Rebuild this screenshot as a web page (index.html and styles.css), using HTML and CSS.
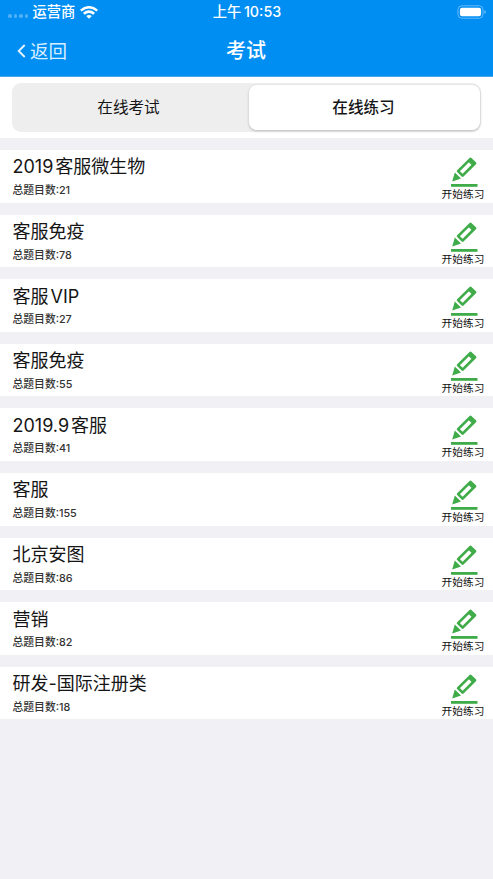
FILE: index.html
```
<!DOCTYPE html>
<html lang="zh-CN">
<head>
<meta charset="utf-8">
<title>考试</title>
<link rel="stylesheet" href="styles.css">
</head>
<body>
<svg class="defs" width="0" height="0"><defs>
<symbol id="pen" viewBox="0 0 28 32">
<path d="M20.5 2.9 25 7.2 12.6 19.6 8.1 15.1Z" fill="none" stroke="#3fac49" stroke-width="2.7" stroke-linejoin="round"/>
<path d="M18.9 4.5 23.4 8.9" stroke="#3fac49" stroke-width="2.6"/>
<path d="M4.8 16.6 11 22.6 2.2 25.4Z" fill="#3fac49"/>
<path d="M1 28H27.5V30.8H1Z" fill="#3fac49"/>
</symbol>
</defs></svg>
<header class="top">
<div class="status">
<div class="carrier"><span class="dots"><i></i><i></i><i></i><i></i></span><span>运营商</span>
<svg class="wifi" width="18" height="13" viewBox="0 0 18 13"><g fill="none" stroke="#fff" stroke-width="2.5"><path d="M.8 4.6Q9-2.1 17.2 4.6"/><path d="M3.8 7.8Q9 3.5 14.2 7.8"/></g><path d="M6.2 10Q9 7.8 11.8 10L9 12.8Z" fill="#fff"/></svg></div>
<div class="time">上午<span class="gap">10:53</span></div>
<svg class="battery" width="30" height="14" viewBox="0 0 30 14"><rect x="1" y=".8" width="25" height="12.4" rx="3.8" fill="none" stroke="#66b9f8"/><rect x="2.9" y="2.7" width="21.2" height="8.6" rx="2.2" fill="#fff"/><path d="M27.5 5Q30 7 27.5 9Z" fill="#8cc9fb"/></svg>
</div>
<nav class="nav">
<div class="back"><svg width="9" height="14" viewBox="0 0 9 14"><path d="M7.7 1 1.7 7 7.7 13" fill="none" stroke="#e4f3ff" stroke-width="1.9"/></svg><span>返回</span></div>
<h1>考试</h1>
<div></div>
</nav>
</header>
<div class="tabs"><div class="segment"><div class="tab">在线考试</div><div class="tab active">在线练习</div></div></div>
<main class="list">
<div class="row"><div><h2>2019<span class="gap">客服微生物</span></h2><p>总题目数:21</p></div><div class="action"><svg class="pen"><use href="#pen"/></svg><span>开始练习</span></div></div>
<div class="row"><div><h2>客服免疫</h2><p>总题目数:78</p></div><div class="action"><svg class="pen"><use href="#pen"/></svg><span>开始练习</span></div></div>
<div class="row"><div><h2>客服<span class="gap">VIP</span></h2><p>总题目数:27</p></div><div class="action"><svg class="pen"><use href="#pen"/></svg><span>开始练习</span></div></div>
<div class="row"><div><h2>客服免疫</h2><p>总题目数:55</p></div><div class="action"><svg class="pen"><use href="#pen"/></svg><span>开始练习</span></div></div>
<div class="row"><div><h2>2019.9<span class="gap">客服</span></h2><p>总题目数:41</p></div><div class="action"><svg class="pen"><use href="#pen"/></svg><span>开始练习</span></div></div>
<div class="row"><div><h2>客服</h2><p>总题目数:155</p></div><div class="action"><svg class="pen"><use href="#pen"/></svg><span>开始练习</span></div></div>
<div class="row"><div><h2>北京安图</h2><p>总题目数:86</p></div><div class="action"><svg class="pen"><use href="#pen"/></svg><span>开始练习</span></div></div>
<div class="row"><div><h2>营销</h2><p>总题目数:82</p></div><div class="action"><svg class="pen"><use href="#pen"/></svg><span>开始练习</span></div></div>
<div class="row"><div><h2>研发-国际注册类</h2><p>总题目数:18</p></div><div class="action"><svg class="pen"><use href="#pen"/></svg><span>开始练习</span></div></div>
</main>
</body>
</html>
```
FILE: styles.css
```
* { box-sizing: border-box; }
body { margin: 0; min-height: 879px; background: #f0f0f5; color: #151515; font-family: Inter, "Noto Sans CJK SC", sans-serif; }
h1, h2, p { margin: 0; font-weight: 400; }
svg { display: block; flex: none; }
.defs { height: 0; }
.gap { margin-left: 2.5px; }
.top { height: 77px; background: #008ef3; color: #fff; border-bottom: 1px solid #46a3ea; }
.status { height: 24px; display: grid; grid-template-columns: 1fr auto 1fr; align-items: center; padding: 0 6px 0 8px; font-size: 14.3px; font-weight: 500; line-height: 24px; }
.carrier { display: flex; align-items: center; }
.dots { display: flex; gap: 2px; margin: 8px 4.5px 0 0; }
.dots i { width: 3.5px; height: 3.5px; border-radius: 50%; background: #4fb0f7; }
.wifi { margin-left: 5px; }
.time { margin-right: 1px; font-size: 14.3px; }
.battery { justify-self: end; }
.nav { height: 54px; display: grid; grid-template-columns: 1fr auto 1fr; align-items: center; padding: 0 18px 0 17px; }
.back { display: flex; align-items: center; gap: 4px; font-size: 18.5px; line-height: 28px; color: #d9eeff; }
.nav h1 { font-size: 20px; font-weight: 500; line-height: 28px; }
.tabs { height: 61px; padding: 6px 12px; background: #fff; }
.segment { height: 49px; display: flex; background: #eee; border-radius: 9px; padding: 2px 1px 2px 0; }
.tab { flex: 0 0 237px; display: flex; align-items: center; justify-content: center; padding: 1px 4px 0 0; font-size: 15.6px; line-height: 22px; }
.tab.active { flex: 1; padding: 1px 2px 0 0; font-weight: 500; background: #fff; border-radius: 8px; box-shadow: 0 1px 3px rgba(0,0,0,.22); }
.list { padding-top: 12px; display: flex; flex-direction: column; gap: 12px; }
.row { height: 52.6px; display: flex; justify-content: space-between; background: #fff; padding: 0 8px 0 12.5px; }
.row h2 { font-size: 18px; line-height: 28px; padding-top: 3.4px; height: 32px; }
.row h2 .gap { margin-left: 2px; }
.row p { font-size: 10.8px; line-height: 18px; color: #333; font-weight: 500; }
.action { width: 44px; display: flex; flex-direction: column; align-items: center; font-size: 10.7px; line-height: 14px; white-space: nowrap; padding-top: 6px; }
.action span { color: #111; }
.pen { width: 28px; height: 32px; margin-left: 2px; }
```
